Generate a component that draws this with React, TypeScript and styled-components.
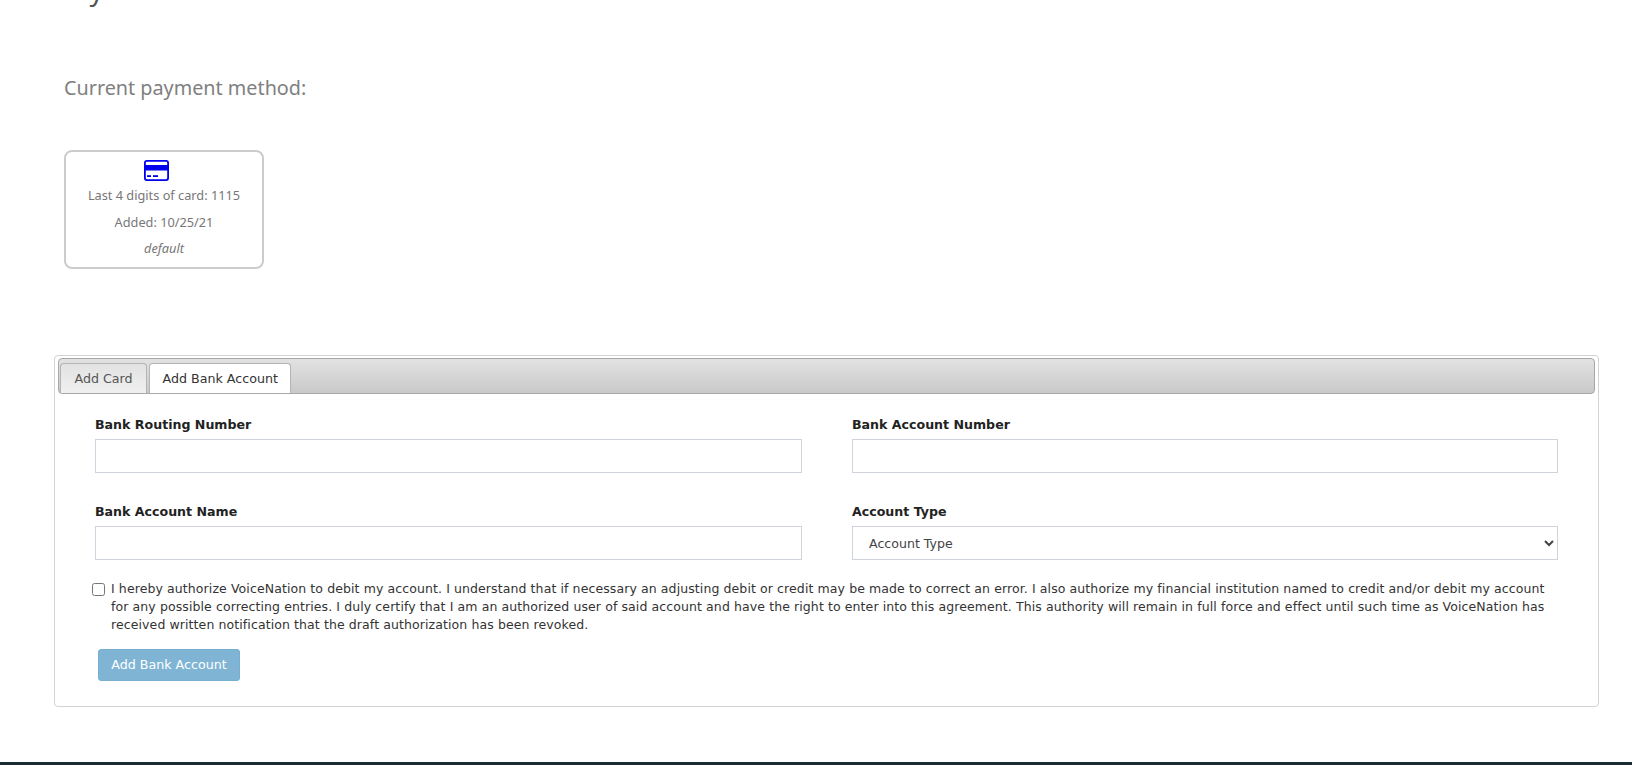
import styled, { createGlobalStyle } from "styled-components";

const GlobalStyle = createGlobalStyle`
  html, body {
    margin: 0;
    padding: 0;
    background: #fff;
    overflow: hidden;
  }
`;

const Page = styled.div`
  width: 1632px;
  height: 765px;
  overflow: hidden;
  display: flex;
  flex-direction: column;
  font-family: "DejaVu Sans", Verdana, sans-serif;
`;

const Main = styled.main`
  flex: 1;
  margin-top: -31px;
  padding: 0 33px 0 54px;
`;

const PageTitle = styled.h1`
  margin: 0 0 0 10px;
  height: 40px;
  font-family: "Noto Sans", sans-serif;
  font-size: 28px;
  line-height: 40px;
  font-weight: 400;
  color: #555;
`;

const SectionTitle = styled.h2`
  margin: 64px 0 0 10px;
  height: 30px;
  font-family: "Noto Sans", sans-serif;
  font-size: 19.8px;
  line-height: 30px;
  font-weight: 400;
  color: #808080;
`;

const MethodCard = styled.div`
  margin: 47px 0 0 10px;
  width: 200px;
  height: 119px;
  box-sizing: border-box;
  border: 2px solid #ccc;
  border-radius: 8px;
  padding: 8px 0 0;
  display: flex;
  flex-direction: column;
  align-items: center;
  font-family: "Noto Sans", sans-serif;
  font-size: 12.75px;
  color: #777;
`;

const CardIcon = styled.svg`
  width: 25px;
  height: 21px;
  display: block;
  margin: 0 15px 1px 0;
`;

const CardLine = styled.div<{ $italic?: boolean }>`
  height: 26.5px;
  line-height: 26.5px;
  font-style: ${(p) => (p.$italic ? "italic" : "normal")};
`;

const Panel = styled.section`
  margin-top: 86px;
  height: 352px;
  box-sizing: border-box;
  border: 1px solid #d3d3d3;
  border-radius: 4px;
  padding: 2px 3px 3px;
`;

const TabBar = styled.div`
  height: 36px;
  box-sizing: border-box;
  border: 1px solid #a8a8a8;
  border-radius: 4px;
  background: linear-gradient(#e2e2e2, #c9c9c9);
  padding: 4px 0 0 1px;
  display: flex;
  gap: 2px;
`;

const Tab = styled.div<{ $active?: boolean }>`
  height: 30px;
  box-sizing: border-box;
  padding: 0 ${(p) => (p.$active ? "12.5px" : "13.5px")};
  border: 1px solid #b4b4b4;
  border-bottom: none;
  border-radius: 4px 4px 0 0;
  background: ${(p) => (p.$active ? "#fff" : "linear-gradient(#e2e2e2, #f0f0f0)")};
  color: ${(p) => (p.$active ? "#333" : "#555")};
  font-size: 12.65px;
  line-height: 29px;
  white-space: nowrap;
`;

const FormBody = styled.div`
  padding: 0 0 0 37px;
`;

const FieldGrid = styled.div`
  display: grid;
  grid-template-columns: 707px 706px;
  column-gap: 50px;
  row-gap: 31px;
  padding-top: 23px;
`;

const Field = styled.div`
  display: flex;
  flex-direction: column;
`;

const FieldLabel = styled.label`
  height: 22px;
  font-size: 12.6px;
  line-height: 16px;
  font-weight: 700;
  color: #222;
`;

const TextInput = styled.input`
  height: 34px;
  box-sizing: border-box;
  border: 1px solid #cfd3dc;
  background: #fff;
  outline: none;
  padding: 0 16px;
`;

const SelectInput = styled.select`
  height: 34px;
  box-sizing: border-box;
  border: 1px solid #cfd3dc;
  border-radius: 0;
  background: #fff;
  padding: 0 12px;
  color: #444;
  font-family: "DejaVu Sans", Verdana, sans-serif;
  font-size: 12.6px;
`;

const Agreement = styled.div`
  display: flex;
  margin: 20px 0 0 -3px;
  gap: 6px;
`;

const AgreementBox = styled.input`
  margin: 3px 0 0;
  width: 13px;
  height: 13px;
  flex: none;
`;

const AgreementText = styled.div`
  width: 1446px;
  font-size: 12.5px;
  line-height: 18px;
  letter-spacing: 0.1px;
  color: #333;
`;

const SubmitButton = styled.button`
  display: block;
  margin: 15px 0 0 3px;
  width: 142px;
  height: 32px;
  border: 1px solid #78aed0;
  border-radius: 3px;
  background: #80b4d4;
  color: #fff;
  font-family: "DejaVu Sans", Verdana, sans-serif;
  font-size: 12.65px;
  padding: 0 0 2px;
`;

const Footer = styled.footer`
  height: 3px;
  flex: none;
  background: #1b2b33;
`;

export default function App() {
  return (
    <Page>
      <GlobalStyle />
      <Main>
        <PageTitle>My Wallet</PageTitle>
        <SectionTitle>Current payment method:</SectionTitle>
        <MethodCard>
          <CardIcon viewBox="0 0 25 21">
            <rect x="0.9" y="0.9" width="23.2" height="19.2" rx="2" fill="none" stroke="#0000ee" strokeWidth="1.8" />
            <rect x="1" y="5" width="23" height="5.5" fill="#0000ee" />
            <rect x="3" y="15.2" width="4" height="1.8" fill="#0000ee" />
            <rect x="9" y="15.2" width="5" height="1.8" fill="#0000ee" />
          </CardIcon>
          <CardLine>Last 4 digits of card: 1115</CardLine>
          <CardLine>Added: 10/25/21</CardLine>
          <CardLine $italic>default</CardLine>
        </MethodCard>
        <Panel>
          <TabBar>
            <Tab>Add Card</Tab>
            <Tab $active>Add Bank Account</Tab>
          </TabBar>
          <FormBody>
            <FieldGrid>
              <Field>
                <FieldLabel>Bank Routing Number</FieldLabel>
                <TextInput type="text" />
              </Field>
              <Field>
                <FieldLabel>Bank Account Number</FieldLabel>
                <TextInput type="text" />
              </Field>
              <Field>
                <FieldLabel>Bank Account Name</FieldLabel>
                <TextInput type="text" />
              </Field>
              <Field>
                <FieldLabel>Account Type</FieldLabel>
                <SelectInput defaultValue="">
                  <option value="">Account Type</option>
                  <option value="checking">Checking</option>
                  <option value="savings">Savings</option>
                </SelectInput>
              </Field>
            </FieldGrid>
            <Agreement>
              <AgreementBox type="checkbox" />
              <AgreementText>
                I hereby authorize VoiceNation to debit my account. I understand that if necessary an adjusting debit or credit may be made to correct an error. I also authorize my financial institution named to credit and/or debit my account for any possible correcting entries. I duly certify that I am an authorized user of said account and have the right to enter into this agreement. This authority will remain in full force and effect until such time as VoiceNation has received written notification that the draft authorization has been revoked.
              </AgreementText>
            </Agreement>
            <SubmitButton>Add Bank Account</SubmitButton>
          </FormBody>
        </Panel>
      </Main>
      <Footer />
    </Page>
  );
}
